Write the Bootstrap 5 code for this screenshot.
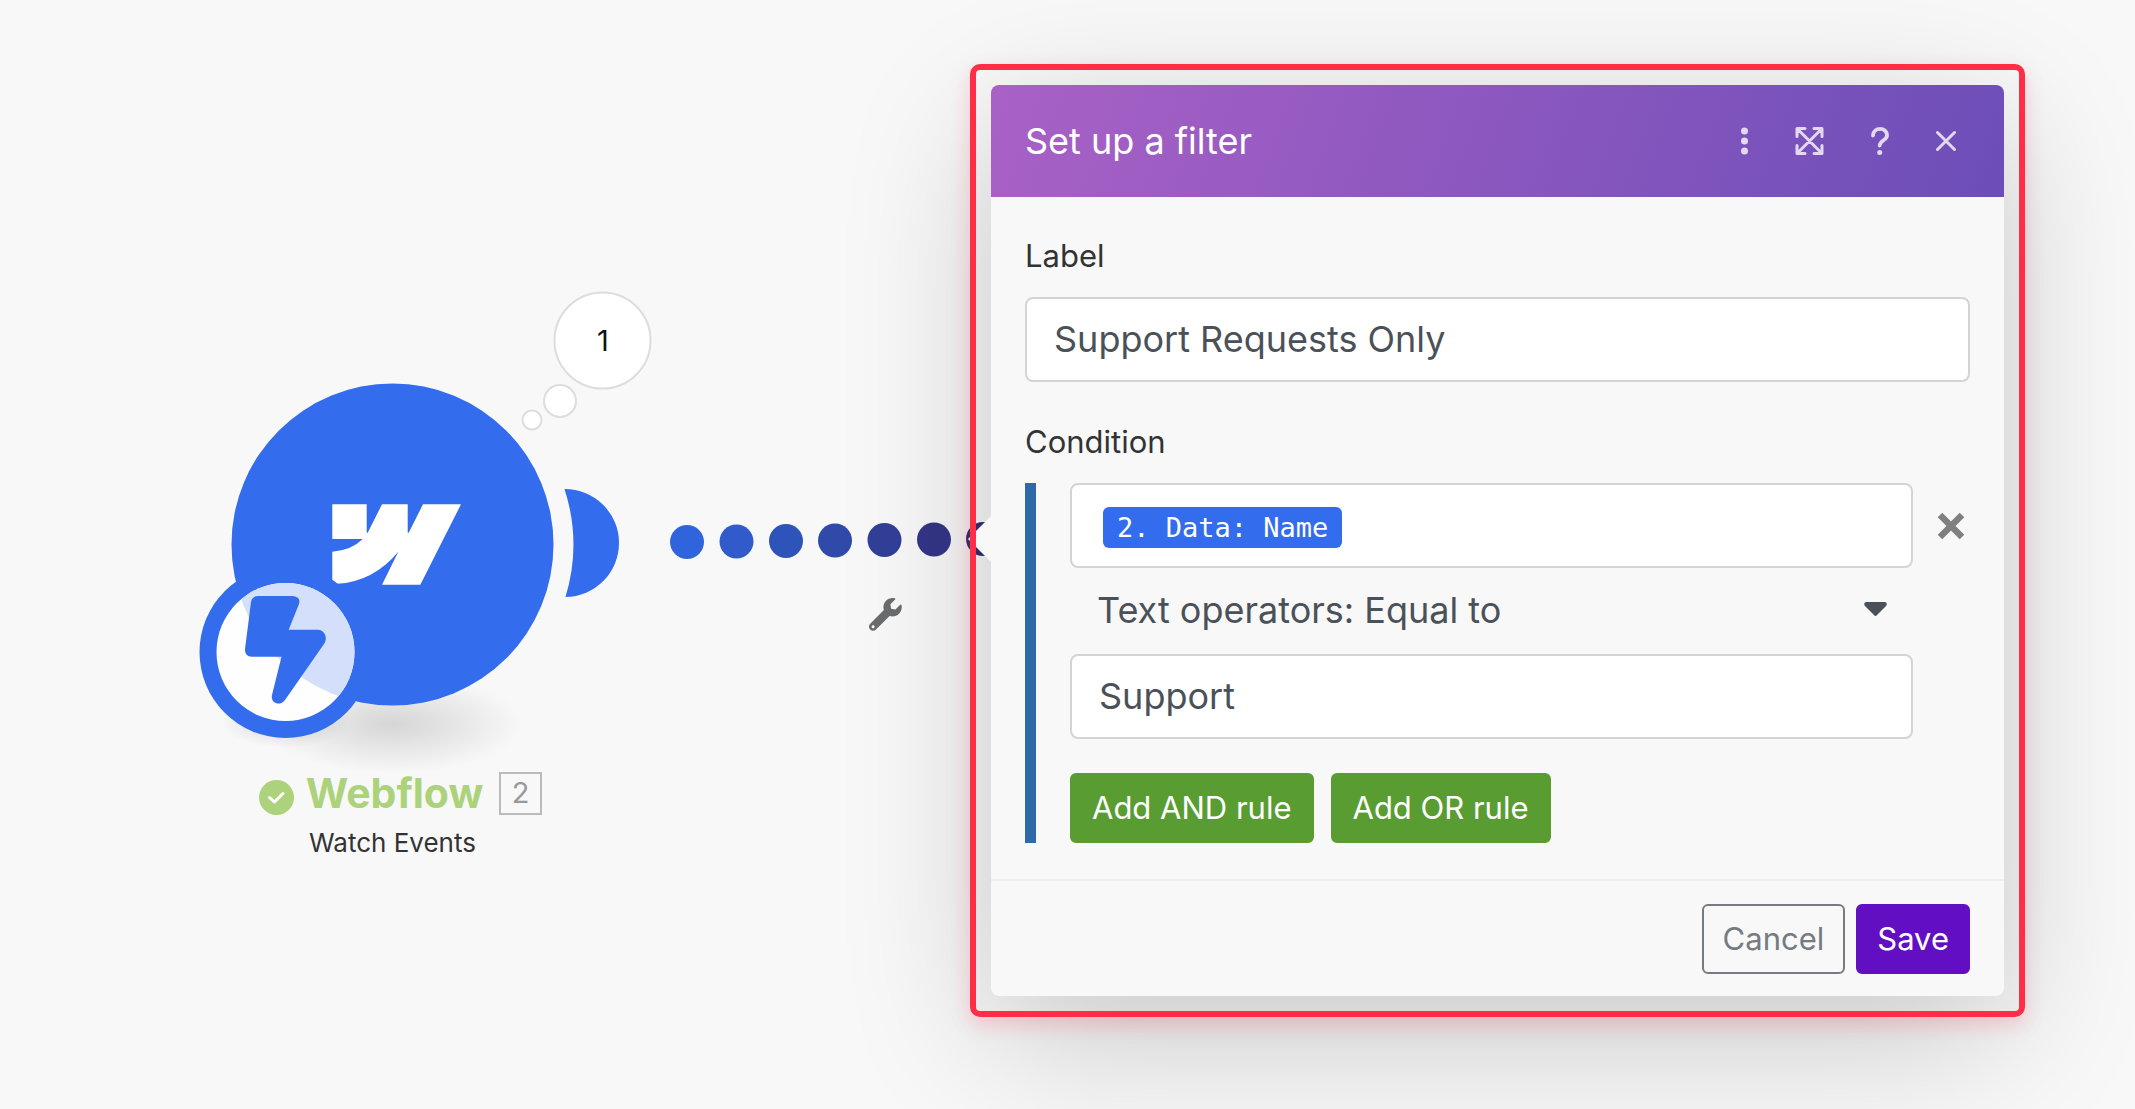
<!DOCTYPE html>
<html lang="en">
<head>
<meta charset="utf-8">
<meta name="viewport" content="width=device-width, initial-scale=1">
<title>Set up a filter</title>
<link rel="stylesheet" href="https://cdn.jsdelivr.net/npm/bootstrap@5.3.0/dist/css/bootstrap.min.css">
<style>
  body {
    background: #f8f8f8;
    color: #333;
    font-family: Inter, "Liberation Sans", sans-serif;
    font-size: 31px;
    line-height: 38px;
    overflow-x: hidden;
  }
  button, input, select { font-family: inherit; }
  svg { display: block; }

  /* scenario canvas */
  .flow-canvas { min-width: 0; }
  .flow-art { left: 0; top: 0; overflow: visible; }
  .node-caption { left: 259px; top: 769px; width: 283px; }
  .node-title {
    color: #acd37c;
    font-size: 41px;
    font-weight: 700;
    line-height: 48px;
  }
  .node-index {
    width: 43px;
    height: 43px;
    border: 2px solid #bbb;
    color: #999;
    font-size: 29px;
    line-height: 37px;
  }
  .node-sub { font-size: 26px; line-height: 32px; margin-top: 10px; }

  /* filter window, with the highlight frame drawn over it */
  .filter-frame {
    flex: 0 1 1055px;
    margin: 64px 110px 0 0;
    padding: 21px;
  }
  .filter-frame::after {
    content: "";
    position: absolute;
    inset: 0;
    border: 6px solid #ff2d48;
    border-radius: 10px;
    box-shadow: 0 8px 20px rgba(255, 45, 72, .2);
    pointer-events: none;
  }
  .filter-window {
    --bs-card-bg: #f8f8f8;
    --bs-card-border-width: 0;
    --bs-card-border-radius: 8px;
    --bs-card-inner-border-radius: 8px;
    box-shadow: 0 40px 150px rgba(0, 0, 0, .2);
  }
  .filter-window::before {
    content: "";
    position: absolute;
    left: -23px;
    top: 431px;
    border: solid transparent;
    border-width: 23px 23px 23px 0;
    border-right-color: #f8f8f8;
  }
  .filter-head {
    height: 112px;
    padding: 0 48px 0 34px;
    border: 0;
    background: linear-gradient(110deg, #a961c6, #6c4eb8);
    color: #fff;
  }
  .filter-title { font-size: 36px; font-weight: 400; line-height: 44px; }
  .head-tools { gap: 47px; color: #e4d8f0; }
  .tool-btn { padding: 0; border: 0; background: none; color: inherit; }

  .filter-body { padding: 40px 34px 36px; }
  .field-label { margin-bottom: 22px; }
  .field-group { margin-bottom: 41px; }
  .field-box {
    height: 85px;
    padding: 0 27px 2px;
    border: 2px solid #d4d4d4;
    border-radius: 8px;
    background-color: #fff;
    color: #4b5158;
    font-size: 36px;
    line-height: 44px;
  }
  .rule-block { border-left: 11px solid #2e6aa8; padding-left: 34px; }
  .rule-side { width: 57px; height: 85px; padding-left: 20px; }
  .token-box { padding: 22px 31px; }
  .token {
    padding: 0 14px;
    border-radius: 6px;
    background: #336ded;
    color: #fff;
    font-family: "DejaVu Sans Mono", monospace;
    font-size: 27px;
    line-height: 41px;
  }
  .op-select {
    height: 86px;
    border-color: transparent;
    padding: 0 60px 3px 25px;
    background: transparent url("data:image/svg+xml,%3Csvg xmlns='http://www.w3.org/2000/svg' viewBox='0 0 23 15'%3E%3Cpath fill='%234b5158' d='M2 0h19q3 1 1 4l-9 9q-1.500 2-3 0l-9-9q-2-3 1-4z'/%3E%3C/svg%3E") no-repeat right 24px top 32px / 23px 15px;
  }
  .rule-actions { gap: 17px; margin-top: 34px; }
  .act-btn {
    height: 70px;
    padding: 0 19px;
    border-width: 2px;
    border-radius: 6px;
    font-size: 31px;
    line-height: 38px;
  }
  .btn-rule { --bs-btn-color: #fff; --bs-btn-bg: #599d32; --bs-btn-border-color: #599d32; --bs-btn-hover-color: #fff; --bs-btn-hover-bg: #4d8a2a; padding: 0 20px; }
  .btn-quit { --bs-btn-color: #757b81; --bs-btn-border-color: #757b81; --bs-btn-hover-color: #fff; --bs-btn-hover-bg: #757b81; }
  .btn-store { --bs-btn-color: #fff; --bs-btn-bg: #620fc3; --bs-btn-border-color: #620fc3; --bs-btn-hover-color: #fff; --bs-btn-hover-bg: #520ba6; }
  .filter-foot {
    gap: 11px;
    padding: 23px 34px 22px;
    border-top: 2px solid #eee;
    background: none;
  }
</style>
</head>
<body>
<main class="d-flex align-items-start min-vh-100">

  <section class="flow-canvas flex-grow-1 position-relative" aria-label="Scenario">
    <svg class="flow-art position-absolute" width="1000" height="860" viewBox="0 0 1000 860" role="img" aria-label="Webflow module linked to the next module">
      <defs>
        <radialGradient id="ground">
          <stop offset="0" stop-color="#000" stop-opacity=".14"/>
          <stop offset=".5" stop-color="#000" stop-opacity=".07"/>
          <stop offset="1" stop-color="#000" stop-opacity="0"/>
        </radialGradient>
        <clipPath id="badge"><circle cx="285.500" cy="652" r="69"/></clipPath>
      </defs>
      <ellipse cx="285" cy="722" rx="64" ry="26" fill="url(#ground)"/>
      <ellipse cx="393" cy="724" rx="130" ry="50" fill="url(#ground)"/>

      <!-- module -->
      <circle cx="392.500" cy="544.500" r="161" fill="#336ded"/>
      <path d="M564.500 489A54 54 0 0 1 565.500 597A180.500 180.500 0 0 0 564.500 489Z" fill="#336ded"/>
      <path d="M332.300 504.300H366.700V532.700H367.700L382 504.300H407.700V532.700H408.700L423 504.300H461L420.300 584.700H382L398.300 551.700Q373 582 337 583.700L332.300 580V551.700Q352 550 362.700 539H332.300Z" fill="#fff"/>

      <!-- trigger badge -->
      <circle cx="285.500" cy="652" r="86" fill="#336ded"/>
      <g clip-path="url(#badge)">
        <rect x="216" y="583" width="139" height="138" fill="#fefefe"/>
        <circle cx="392.500" cy="544.500" r="161" fill="#d4e0fb"/>
      </g>
      <path d="M258 596H293Q301 597 299 604L288.700 629.700H318C325 630 328 638 324 644L285 700C280 707 270 703 272 695L281.500 656.700H252C247 656.700 244.700 653 245 649L251 602Q252 596 258 596Z" fill="#336ded"/>

      <!-- thought bubble -->
      <g fill="#fff" stroke="#ddd" stroke-width="2">
        <circle cx="602.500" cy="340.500" r="48"/>
        <circle cx="560" cy="401" r="16"/>
        <circle cx="532" cy="420" r="9.500"/>
      </g>
      <text x="603" y="351" text-anchor="middle" font-size="29" fill="#111">1</text>

      <!-- link -->
      <circle cx="687" cy="542" r="17" fill="#3064dc"/>
      <circle cx="736.500" cy="541.500" r="17" fill="#315bca"/>
      <circle cx="786" cy="541" r="17" fill="#2e53b9"/>
      <circle cx="835" cy="540.500" r="17" fill="#2f4aa9"/>
      <circle cx="884.500" cy="540" r="17" fill="#323f98"/>
      <circle cx="934" cy="539.500" r="17" fill="#343688"/>
      <circle cx="983" cy="539" r="17" fill="#352d78"/>

      <path transform="translate(869 598) scale(.064)" fill="#6a6c6e" d="M507.730 109.100c-2.240-9.030-13.540-12.090-20.120-5.510l-74.360 74.360-67.880-11.310-11.310-67.880 74.360-74.360c6.620-6.620 3.430-17.900-5.660-20.160-47.380-11.740-99.550.910-136.580 37.930-39.640 39.640-50.550 97.100-34.050 147.200L18.740 402.760c-24.990 24.990-24.990 65.510 0 90.500 24.990 24.990 65.510 24.990 90.500 0l213.210-213.210c50.120 16.710 107.470 5.680 147.370-34.220 37.070-37.070 49.700-89.320 37.910-136.730zM64 472c-13.250 0-24-10.750-24-24 0-13.260 10.750-24 24-24s24 10.750 24 24c0 13.250-10.750 24-24 24z"/>
    </svg>

    <div class="node-caption position-absolute">
      <div class="d-flex align-items-center justify-content-between">
        <svg width="35" height="35" viewBox="0 0 35 35" class="mt-2" aria-hidden="true">
          <circle cx="17.500" cy="17.500" r="17.500" fill="#acd37c"/>
          <path d="M10.500 17.500L15.500 22L24 13.500" fill="none" stroke="#fff" stroke-width="3" stroke-linecap="round" stroke-linejoin="round"/>
        </svg>
        <span class="node-title">Webflow</span>
        <span class="node-index text-center ms-1">2</span>
      </div>
      <div class="node-sub text-center pe-3">Watch Events</div>
    </div>
  </section>

  <div class="filter-frame position-relative">
    <form class="filter-window card" onsubmit="return false">
      <div class="filter-head card-header d-flex align-items-center justify-content-between">
        <h1 class="filter-title m-0">Set up a filter</h1>
        <div class="head-tools d-flex align-items-center">
          <button type="button" class="tool-btn" aria-label="More">
            <svg width="7" height="28" viewBox="0 0 7 28" fill="currentColor"><circle cx="3.500" cy="4" r="3.500"/><circle cx="3.500" cy="14" r="3.500"/><circle cx="3.500" cy="24" r="3.500"/></svg>
          </button>
          <button type="button" class="tool-btn" aria-label="Expand">
            <svg width="29" height="28" viewBox="0 0 29 28" fill="none" stroke="currentColor" stroke-width="3" stroke-linecap="round" stroke-linejoin="round"><path d="M2 9.500V1.500H10M19 1.500H27V9.500M27 18.500V26.500H19M10 26.500H2V18.500M2.500 2L26.500 26M26.500 2L2.500 26"/></svg>
          </button>
          <button type="button" class="tool-btn" aria-label="Help">
            <svg width="18" height="28" viewBox="0 0 18 28" fill="none" stroke="currentColor" stroke-width="3.800" stroke-linecap="round"><path d="M2 8.500C2.400-.300 16-.300 16 8.500C16 13.500 9 13 8.700 18.500"/><circle cx="8.700" cy="25.500" r="2.500" fill="currentColor" stroke="none"/></svg>
          </button>
          <button type="button" class="tool-btn" aria-label="Close">
            <svg width="20" height="28" viewBox="0 0 20 28" fill="none" stroke="currentColor" stroke-width="3" stroke-linecap="round"><path d="M1.500 5.500L18.500 22.500M18.500 5.500L1.500 22.500"/></svg>
          </button>
        </div>
      </div>

      <div class="filter-body card-body">
        <div class="field-group">
          <label class="field-label d-block" for="filter-label">Label</label>
          <input class="field-box form-control" id="filter-label" type="text" value="Support Requests Only">
        </div>

        <div id="condition-label" class="field-label">Condition</div>
        <div class="rule-block" role="group" aria-labelledby="condition-label">
          <div class="d-flex">
            <div class="flex-grow-1">
              <div class="field-box token-box d-flex align-items-start" role="textbox" tabindex="0" aria-label="Value"><span class="token">2. Data: Name</span></div>
              <select class="field-box op-select form-select" aria-label="Operator">
                <option>Text operators: Equal to</option>
              </select>
              <input class="field-box form-control" type="text" value="Support" aria-label="Compared value">
            </div>
            <div class="rule-side d-flex align-items-center">
              <button type="button" class="tool-btn px-1" aria-label="Remove rule">
                <svg width="28" height="28" viewBox="0 0 28 28" fill="none" stroke="#808080" stroke-width="6.500"><path d="M3 3L25 25M25 3L3 25"/></svg>
              </button>
            </div>
          </div>
          <div class="rule-actions d-flex">
            <button type="button" class="btn btn-rule act-btn">Add AND rule</button>
            <button type="button" class="btn btn-rule act-btn">Add OR rule</button>
          </div>
        </div>
      </div>

      <div class="filter-foot card-footer d-flex justify-content-end">
        <button type="button" class="btn btn-quit act-btn">Cancel</button>
        <button type="submit" class="btn btn-store act-btn">Save</button>
      </div>
    </form>
  </div>
</main>
<script src="https://cdn.jsdelivr.net/npm/bootstrap@5.3.0/dist/js/bootstrap.bundle.min.js"></script>
</body>
</html>
